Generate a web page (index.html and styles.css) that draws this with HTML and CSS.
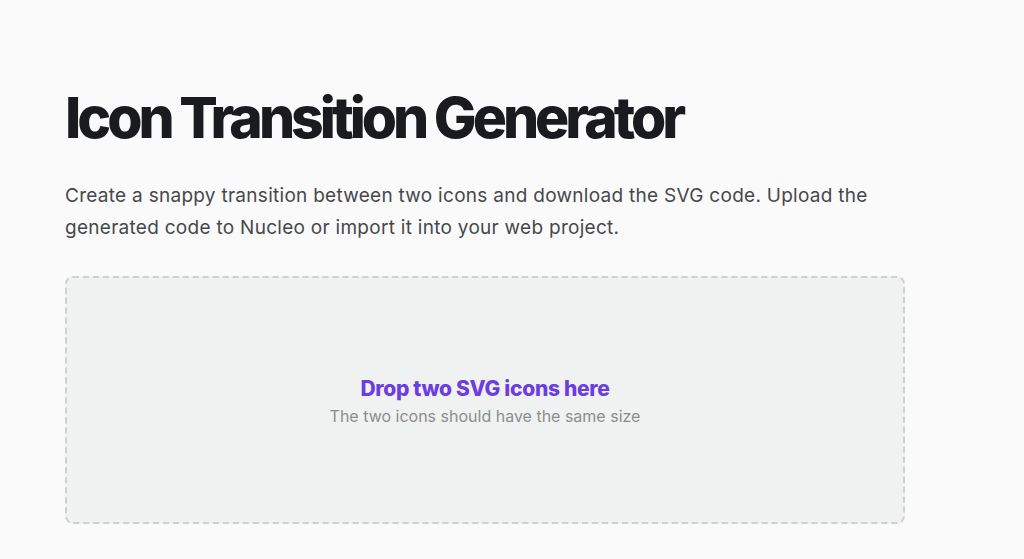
FILE: index.html
```html
<!DOCTYPE html>
<html>
<head>
<meta charset="utf-8">
<link rel="stylesheet" href="styles.css">
</head>
<body>
<main class="page">
  <h1 class="title">Icon Transition Generator</h1>
  <p class="lead">Create a snappy transition between two icons and download the SVG code. Upload the generated code to Nucleo or import it into your web project.</p>
  <div class="dropzone">
    <div class="drop-title">Drop two SVG icons here</div>
    <div class="drop-sub">The two icons should have the same size</div>
  </div>
</main>
</body>
</html>
```
FILE: styles.css
```css
html, body {
  margin: 0;
  padding: 0;
  background: #fafafa;
}
body {
  font-family: Inter, "Noto Sans", sans-serif;
}
.page {
  width: 840px;
  margin-left: 65px;
  padding-top: 84px;
}
.title {
  margin: 0;
  font-family: Inter, sans-serif;
  font-weight: 800;
  font-size: 57px;
  line-height: 68px;
  letter-spacing: -4px;
  color: #1a1b1e;
}
.lead {
  margin: 28px 0 0;
  font-size: 19px;
  line-height: 32px;
  letter-spacing: 0.28px;
  color: #46484c;
  width: 840px;
}
.dropzone {
  margin-top: 32px;
  height: 244px;
  border: 2px dashed #cfd0d0;
  border-radius: 8px;
  background: #f0f1f1;
  display: flex;
  flex-direction: column;
  align-items: center;
  justify-content: center;
  gap: 3px;
}
.drop-title {
  font-weight: 800;
  font-size: 21px;
  letter-spacing: -0.3px;
  color: #6a3ee0;
  line-height: 28px;
}
.drop-sub {
  font-size: 16px;
  color: #8c8d8f;
  line-height: 20px;
}
```
